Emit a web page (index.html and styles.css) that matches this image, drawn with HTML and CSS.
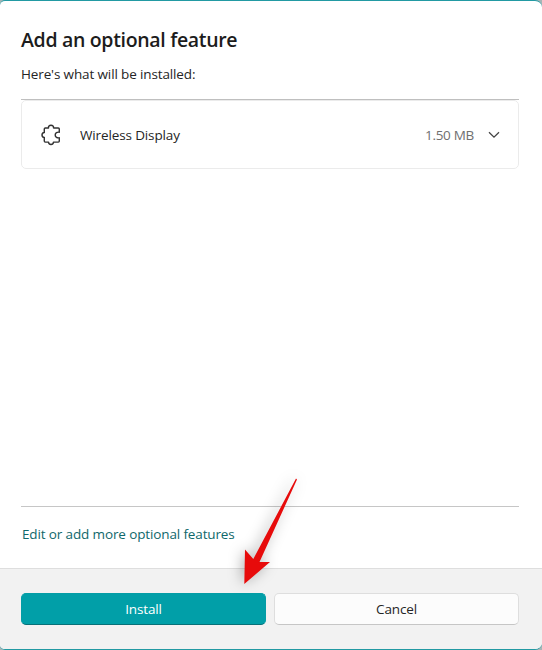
FILE: index.html
```html
<!DOCTYPE html>
<html lang="en">
<head>
<meta charset="utf-8">
<title>Add an optional feature</title>
<link rel="stylesheet" href="styles.css">
</head>
<body>
<main class="dialog">
  <section class="content">
    <h1 class="title">Add an optional feature</h1>
    <p class="subtitle">Here's what will be installed:</p>
    <div class="list">
      <div class="card">
        <svg class="puzzle" viewBox="0 0 20 22" fill="none" stroke="#333" stroke-width="1.45" stroke-linejoin="round">
          <path d="M4.3 3.9H7.5C7.3 2.2 8.2 1.2 10 1.2S12.7 2.2 12.5 3.9H17.3Q18.3 3.9 18.3 4.9V8.2C16.2 7.8 14.2 9 14.2 11S16.2 14.2 18.3 13.8V17.1Q18.3 18.1 17.3 18.1H12.5C12.5 19.8 11.6 20.5 10 20.5S7.5 19.8 7.5 18.1H4.3Q3.3 18.1 3.3 17.1V13.5C1.7 13.3 1 12.4 1 11S1.7 8.7 3.3 8.5V4.9Q3.3 3.9 4.3 3.9Z"/>
        </svg>
        <span class="name">Wireless Display</span>
        <span class="size">1.50 MB</span>
        <svg class="chevron" viewBox="0 0 12 8" fill="none" stroke="#444" stroke-width="1.3"><path d="M1 1.2 6 6.2 11 1.2"/></svg>
      </div>
    </div>
    <a class="link">Edit or add more optional features</a>
  </section>
  <footer class="footer">
    <button class="button primary">Install</button>
    <button class="button">Cancel</button>
  </footer>
</main>
<svg class="pointer" viewBox="0 0 140 170">
  <path d="M96 13.5 97 14.5 59.5 97 70 97 44.3 119 45 84.5 53.3 94Z"/>
</svg>
</body>
</html>
```
FILE: styles.css
```css
* { box-sizing: border-box; }
body {
  margin: 0;
  height: 650px;
  overflow: hidden;
  background: #a5b5b6;
  font: 13.5px/20px "Open Sans", "Noto Sans", sans-serif;
  letter-spacing: -0.13px;
  color: #252525;
}
.dialog {
  height: 650px;
  display: flex;
  flex-direction: column;
  border-top: 1px solid #229aa3;
  border-bottom: 1px solid #229aa3;
  border-radius: 5px 7px 7px 5px;
  background: #fff;
  overflow: hidden;
}
.content {
  flex: 1;
  display: flex;
  flex-direction: column;
  padding: 25px 23px 0 21px;
}
.title {
  margin: 0;
  font-size: 19.5px;
  font-weight: 600;
  line-height: 28px;
  letter-spacing: -0.32px;
  color: #1c1c1c;
}
.subtitle { margin: 10px 0 15px; }
.list {
  height: 408px;
  border-top: 1px solid #bfbfbf;
  border-bottom: 1px solid #c6c6c6;
}
.card {
  height: 69px;
  display: flex;
  align-items: center;
  padding: 0 18px 0 19px;
  border: 1px solid #ebebeb;
  border-radius: 5px;
}
.puzzle { width: 20px; height: 22px; margin-right: 19px; }
.name { flex: 1; }
.size { margin-right: 14px; letter-spacing: -0.3px; color: #707070; }
.chevron { width: 12px; height: 8px; }
.link { margin: 17px 0 0 1px; color: #0f686b; }
.footer {
  height: 81px;
  display: flex;
  gap: 8px;
  padding: 24px 23px 0 21px;
  border-top: 1px solid #dedede;
  background: #f2f2f2;
}
.button {
  flex: 1;
  height: 32px;
  padding: 0;
  border: 1px solid #dedede;
  border-bottom-color: #c6c6c6;
  border-radius: 5px;
  background: #fcfcfc;
  color: #252525;
  font: inherit;
  letter-spacing: -0.13px;
}
.primary {
  border-color: #049da6;
  border-bottom-color: #087078;
  background: #019fa8;
  color: #fff;
}
.pointer {
  position: absolute;
  left: 200px;
  top: 465px;
  width: 140px;
  height: 170px;
  fill: #e70b0b;
  filter: drop-shadow(-2px 0 7px rgba(0, 0, 0, .32));
}
```
